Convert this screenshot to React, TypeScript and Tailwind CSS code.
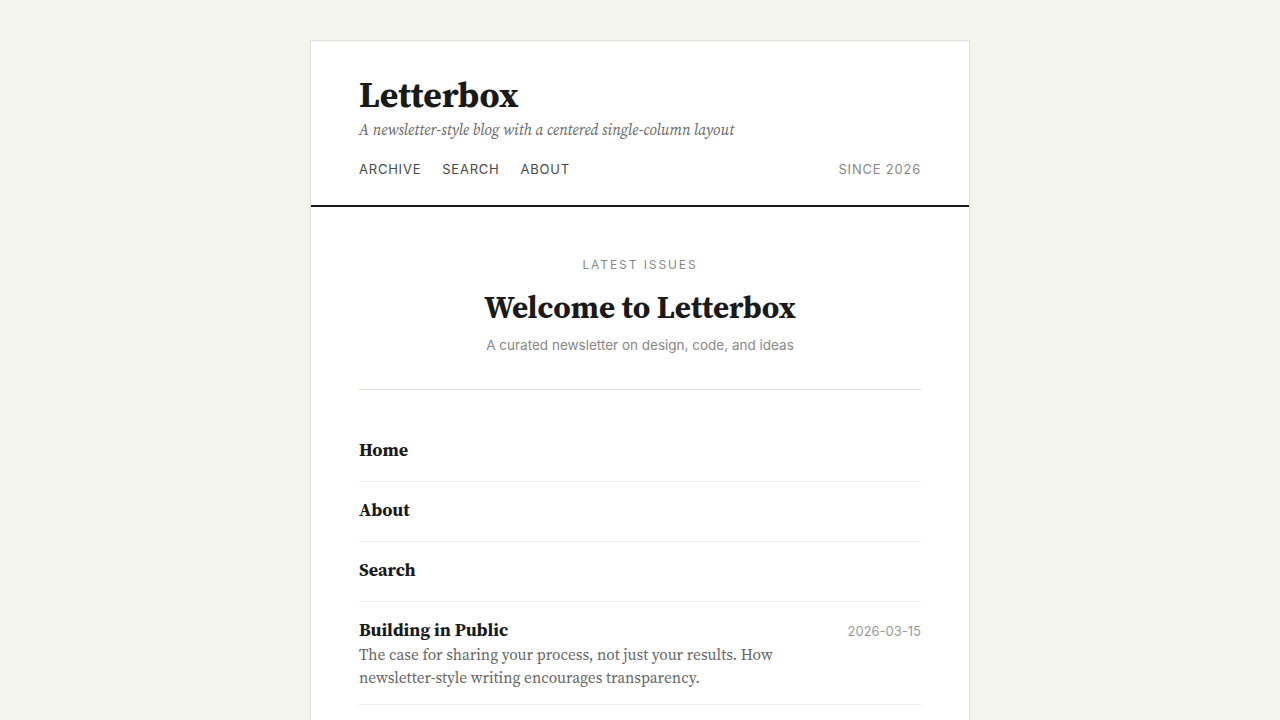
import React from "react";

const serif = { fontFamily: '"Source Serif 4", "Liberation Serif", serif' };
const sans = { fontFamily: 'Inter, "Liberation Sans", sans-serif' };

const pages = ["Home", "About", "Search"];

export default function App() {
  return (
    <div className="min-h-screen bg-[#f4f4ef] pt-10" style={sans}>
      <div className="mx-auto min-h-[720px] w-[660px] border border-[#e2e0d6] bg-white">
        <header className="border-b-2 border-[#1a1a1a] px-12 pt-[34px] pb-[25px]">
          <h1 className="text-[35.6px] font-bold leading-[40px] text-[#1a1a1a]" style={serif}>
            Letterbox
          </h1>
          <p className="mt-[4px] text-[15.2px] italic leading-[22px] text-[#666]" style={serif}>
            A newsletter-style blog with a centered single-column layout
          </p>
          <nav className="mt-[19px] flex items-center justify-between text-[13px] uppercase tracking-[0.06em]">
            <div className="flex gap-[21px] text-[#4a4a4a]">
              <span>Archive</span>
              <span>Search</span>
              <span>About</span>
            </div>
            <span className="text-[#888]">Since 2026</span>
          </nav>
        </header>
        <main className="px-12 pt-[50px]">
          <div className="border-b border-[#e2e0d6] pb-[34px] text-center">
            <div className="text-[12px] uppercase leading-[16px] tracking-[0.16em] text-[#888]">Latest Issues</div>
            <h2 className="mt-[16px] text-[31px] font-bold leading-[36px] text-[#1a1a1a]" style={serif}>
              Welcome to Letterbox
            </h2>
            <p className="mt-[10px] text-[13.5px] leading-[20px] text-[#888]">
              A curated newsletter on design, code, and ideas
            </p>
          </div>
          <ul className="pt-[32px]">
            {pages.map((p) => (
              <li key={p} className="border-b border-[#eeeeea] pt-[15px] pb-[19px]">
                <span className="text-[18px] font-bold leading-[25px] text-[#1a1a1a]" style={serif}>
                  {p}
                </span>
              </li>
            ))}
            <li className="border-b border-[#eeeeea] pt-[15px] pb-[15px]">
              <div className="flex items-baseline justify-between">
                <span className="text-[18px] font-bold leading-[25px] text-[#1a1a1a]" style={serif}>
                  Building in Public
                </span>
                <span className="text-[13px] text-[#999]">2026-03-15</span>
              </div>
              <p className="mt-[1px] max-w-[440px] text-[15.4px] leading-[23px] text-[#666]" style={serif}>
                The case for sharing your process, not just your results. How newsletter-style writing encourages transparency.
              </p>
            </li>
          </ul>
        </main>
      </div>
    </div>
  );
}
